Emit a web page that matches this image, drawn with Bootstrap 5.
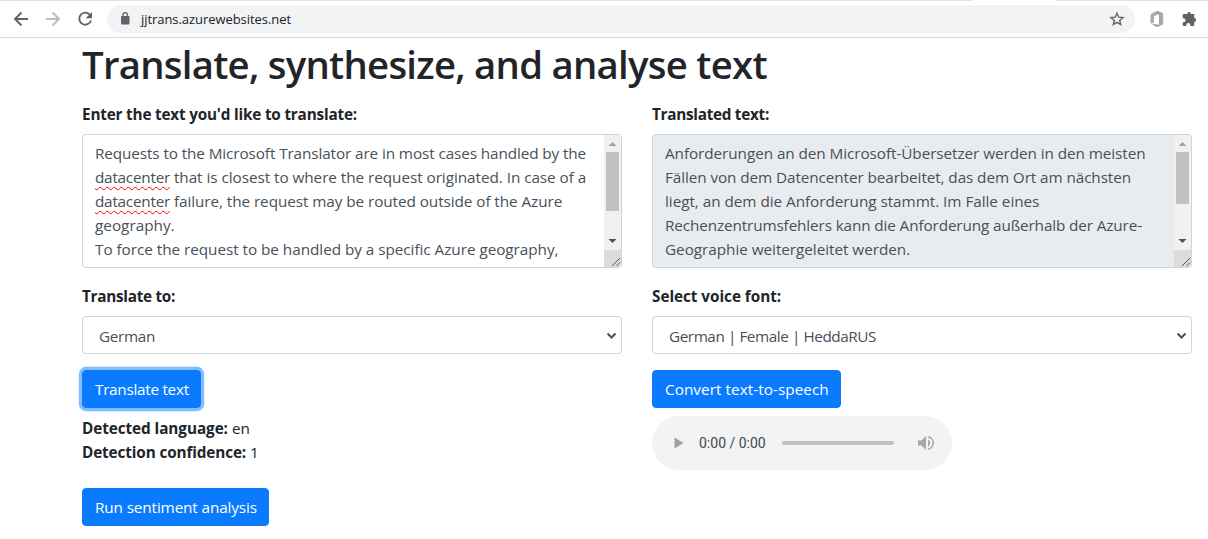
<!DOCTYPE html>
<html lang="en">
<head>
<meta charset="utf-8">
<meta name="viewport" content="width=device-width, initial-scale=1">
<title>Translate, synthesize, and analyse text</title>
<link href="https://cdn.jsdelivr.net/npm/bootstrap@5.3.0/dist/css/bootstrap.min.css" rel="stylesheet">
<style>
body{font-family:"Open Sans","Noto Sans",sans-serif;font-size:15.3px;line-height:24px;color:#212529;height:539px;overflow:hidden;background:#fff}
.toolbar{height:38px;border-bottom:1px solid #d9dbde;padding-left:13px;position:relative}
.tabedge{position:absolute;top:0;height:1px;background:#dee1e6}
.tabedge.before{left:0;width:972px}
.tabedge.after{left:1057px;width:151px}
.omnibox{height:28px;width:1028px;margin-top:1px;background:#f1f3f4;border-radius:14px;font-size:13px;letter-spacing:-.06px;color:#202124}
.omnibox .star{margin-right:10px}
.page{padding-left:82px;padding-right:16px}
h1{font-size:38.3px;line-height:48px;font-weight:600;letter-spacing:-.73px;margin:2px 0 14px;white-space:nowrap}
.cols{display:grid;grid-template-columns:540px 540px;gap:30px}
.lbl{font-weight:700;display:block;height:24px;margin-bottom:8px;white-space:nowrap}
.field{border:1px solid #ced4da;border-radius:4px;color:#495057;background:#fff}
.area{height:134px;padding:6px 0 0 12px;position:relative;overflow:hidden;margin-bottom:16px}
.area>p{margin:0;height:24px;white-space:nowrap}
.area.ro{background:#e9ecef}
.sbar{position:absolute;right:0;top:0;bottom:0;width:17px;background:#f1f1f1}
.sbar svg{display:block}
.pick{height:38px;padding:1px 4px 0 16px;margin-bottom:16px}
.btn{--bs-btn-bg:#0a7bff;--bs-btn-border-color:#0a7bff;--bs-btn-font-size:15.3px;--bs-btn-line-height:24px;--bs-btn-border-radius:4px;height:38px;padding:6px 0 6px 12px;text-align:left;display:block;white-space:nowrap}
.b-translate{width:119px}
.b-sentiment{width:187px;margin-top:24px}
.b-speech{width:189px}
.ring{box-shadow:0 0 0 3.2px #80bdff}
.detected{margin-top:8px}
.player{width:300px;height:54px;margin-top:8px;border-radius:27px;background:#f1f3f4;font-family:Roboto,sans-serif;font-size:14px;color:#46484a}
.typo{text-decoration:underline wavy #f00 1px;text-underline-offset:3px}
.t0{letter-spacing:.05px}.t3{letter-spacing:-.04px}.t6{letter-spacing:-.07px}.t9{letter-spacing:-.09px}.t10{letter-spacing:-.105px}.t12{letter-spacing:-.126px}.t19{letter-spacing:-.19px}.t24{letter-spacing:-.24px}.t28{letter-spacing:-.28px}.t33{letter-spacing:-.34px}.t43{letter-spacing:-.438px}.rest{letter-spacing:-.05px}
</style>
</head>
<body>
<header class="toolbar d-flex align-items-center">
<span class="tabedge before"></span><span class="tabedge after"></span>
<svg width="94" height="20" viewBox="13 9 94 20" fill="none" stroke="#5f6368" stroke-width="1.9"><path d="M28 19H15.5M21.5 12.5L15 19l6.500 6.500"/><path stroke="#babcbe" d="M46 19h12.500M52.500 12.500L59 19l-6.500 6.500"/><path d="M89.700 14.600A6 6 0 1 0 91 20.500"/><path fill="#5f6368" stroke="none" d="M92 12v6.300h-6.300z"/></svg>
<div class="omnibox d-flex align-items-center"><svg width="34" height="28" viewBox="0 0 34 28"><path fill="#5f6368" d="M15 11h6.500a1 1 0 0 1 1 1v6.500a1 1 0 0 1-1 1H15a1 1 0 0 1-1-1V12a1 1 0 0 1 1-1z"/><path fill="none" stroke="#5f6368" stroke-width="1.300" d="M16 11.500V9.800a2.250 2.250 0 0 1 4.500 0v1.700"/></svg><span>jjtrans.azurewebsites.net</span>
<svg class="ms-auto star" width="16" height="16" viewBox="0 0 16 16"><path fill="none" stroke="#5f6368" stroke-width="1.400" d="M8 2.200l1.700 4 4.300.4-3.300 2.800 1 4.200L8 11.400l-3.700 2.200 1-4.200L2 6.600l4.300-.4z"/></svg></div>
<svg width="73" height="28" viewBox="1135 5 73 28"><defs><linearGradient id="og"><stop offset="0" stop-color="#777"/><stop offset="1" stop-color="#b5b5b5"/></linearGradient></defs><path fill="#aaa" d="M1150.500 15.500q0-1.500 1.500-2.200l5.500-2.500v4l-3.500 1.500v6l-2 1.200q-1.500.3-1.500-1.500z"/><path fill="url(#og)" d="M1157 11l5 1.600q1.300.5 1.300 1.700v9.200q0 1.200-1.300 1.600l-4.500 1.600q-1 .2-2-.4l-3.500-2.300 7 .8V14.500l-2-.8z"/><path fill="#5f6368" d="M1194 14h-3a1.900 1.900 0 0 0-3.800 0h-3.200a1.300 1.300 0 0 0-1.300 1.300v2.900h.8a2 2 0 0 1 0 4h-.8v2.500a1.300 1.300 0 0 0 1.300 1.300h2.300v-1a2 2 0 0 1 4 0v1h2.700a1.300 1.300 0 0 0 1.300-1.300v-3a1.900 1.900 0 0 0 0-3.800v-2.600a1.300 1.300 0 0 0-.3-1.300z"/></svg>
</header>
<main class="page">
<h1>Translate, synthesize, and analyse text</h1>
<div class="cols">
<section>
<label class="lbl t19">Enter the text you'd like to translate:</label>
<div class="field area">
<p class="t10">Requests to the Microsoft Translator are in most cases handled by the</p>
<p class="rest"><span class="typo t24">datacenter</span> that is closest to where the request originated. In case of a</p>
<p class="t6"><span class="typo t24">datacenter</span> failure, the request may be routed outside of the Azure</p>
<p>geography.</p>
<p class="t3">To force the request to be handled by a specific Azure geography,</p>
<div class="sbar"><svg width="17" height="132"><path fill="#a3a3a3" d="M4.500 11h8l-4-4z"/><path fill="#c1c1c1" d="M2 17h13v59H2z"/><path fill="#505050" d="M4.500 104h8l-4 4z"/><path fill="#dcdcdc" d="M0 115h17v17H0z"/><path stroke="#555" d="M8 131l8-8M12.500 131l3.500-3.500"/></svg></div>
</div>
<label class="lbl t28">Translate to:</label>
<div class="field pick d-flex align-items-center justify-content-between"><span class="t33">German</span><svg width="11" height="10"><path d="M1.500 2.500l4 4 4-4" fill="none" stroke="#495057" stroke-width="2"/></svg></div>
<button class="btn btn-primary ring b-translate t28">Translate text</button>
<div class="detected"><b class="t6">Detected language:</b> en<br><b class="t12">Detection confidence:</b> 1</div>
<button class="btn btn-primary b-sentiment t12">Run sentiment analysis</button>
</section>
<section>
<label class="lbl t28">Translated text:</label>
<div class="field area ro">
<p class="t6">Anforderungen an den Microsoft-Übersetzer werden in den meisten</p>
<p class="t9">Fällen von dem Datencenter bearbeitet, das dem Ort am nächsten</p>
<p class="t3">liegt, an dem die Anforderung stammt. Im Falle eines</p>
<p class="t12">Rechenzentrumsfehlers kann die Anforderung außerhalb der Azure-</p>
<p class="t3">Geographie weitergeleitet werden.</p>
<div class="sbar"><svg width="17" height="132"><path fill="#a3a3a3" d="M4.500 11h8l-4-4z"/><path fill="#c1c1c1" d="M2 17h13v52H2z"/><path fill="#505050" d="M4.500 104h8l-4 4z"/><path fill="#dcdcdc" d="M0 115h17v17H0z"/><path stroke="#555" d="M8 131l8-8M12.500 131l3.500-3.500"/></svg></div>
</div>
<label class="lbl t3">Select voice font:</label>
<div class="field pick d-flex align-items-center justify-content-between"><span class="t43">German | Female | HeddaRUS</span><svg width="11" height="10"><path d="M1.500 2.500l4 4 4-4" fill="none" stroke="#495057" stroke-width="2"/></svg></div>
<button class="btn btn-primary b-speech t0">Convert text-to-speech</button>
<div class="player d-flex align-items-center"><svg width="47" height="54"><path fill="#9fa1a2" d="M22.500 21.500v11l9-5.500z"/></svg><span>0:00 / 0:00</span><svg width="186" height="54"><path stroke="#bfc0c1" stroke-width="4" stroke-linecap="round" d="M18 27h108"/><path fill="#a5a7a8" d="M152 24.500h3.500l4.500-4.500v14l-4.500-4.500H152zM162 23.300a4.200 4.200 0 0 1 0 7.400z"/><path fill="none" stroke="#a5a7a8" stroke-width="1.600" d="M162 20.800a6.300 6.300 0 0 1 0 12.400"/></svg></div>
</section>
</div>
</main>
<script src="https://cdn.jsdelivr.net/npm/bootstrap@5.3.0/dist/js/bootstrap.bundle.min.js"></script>
</body>
</html>
